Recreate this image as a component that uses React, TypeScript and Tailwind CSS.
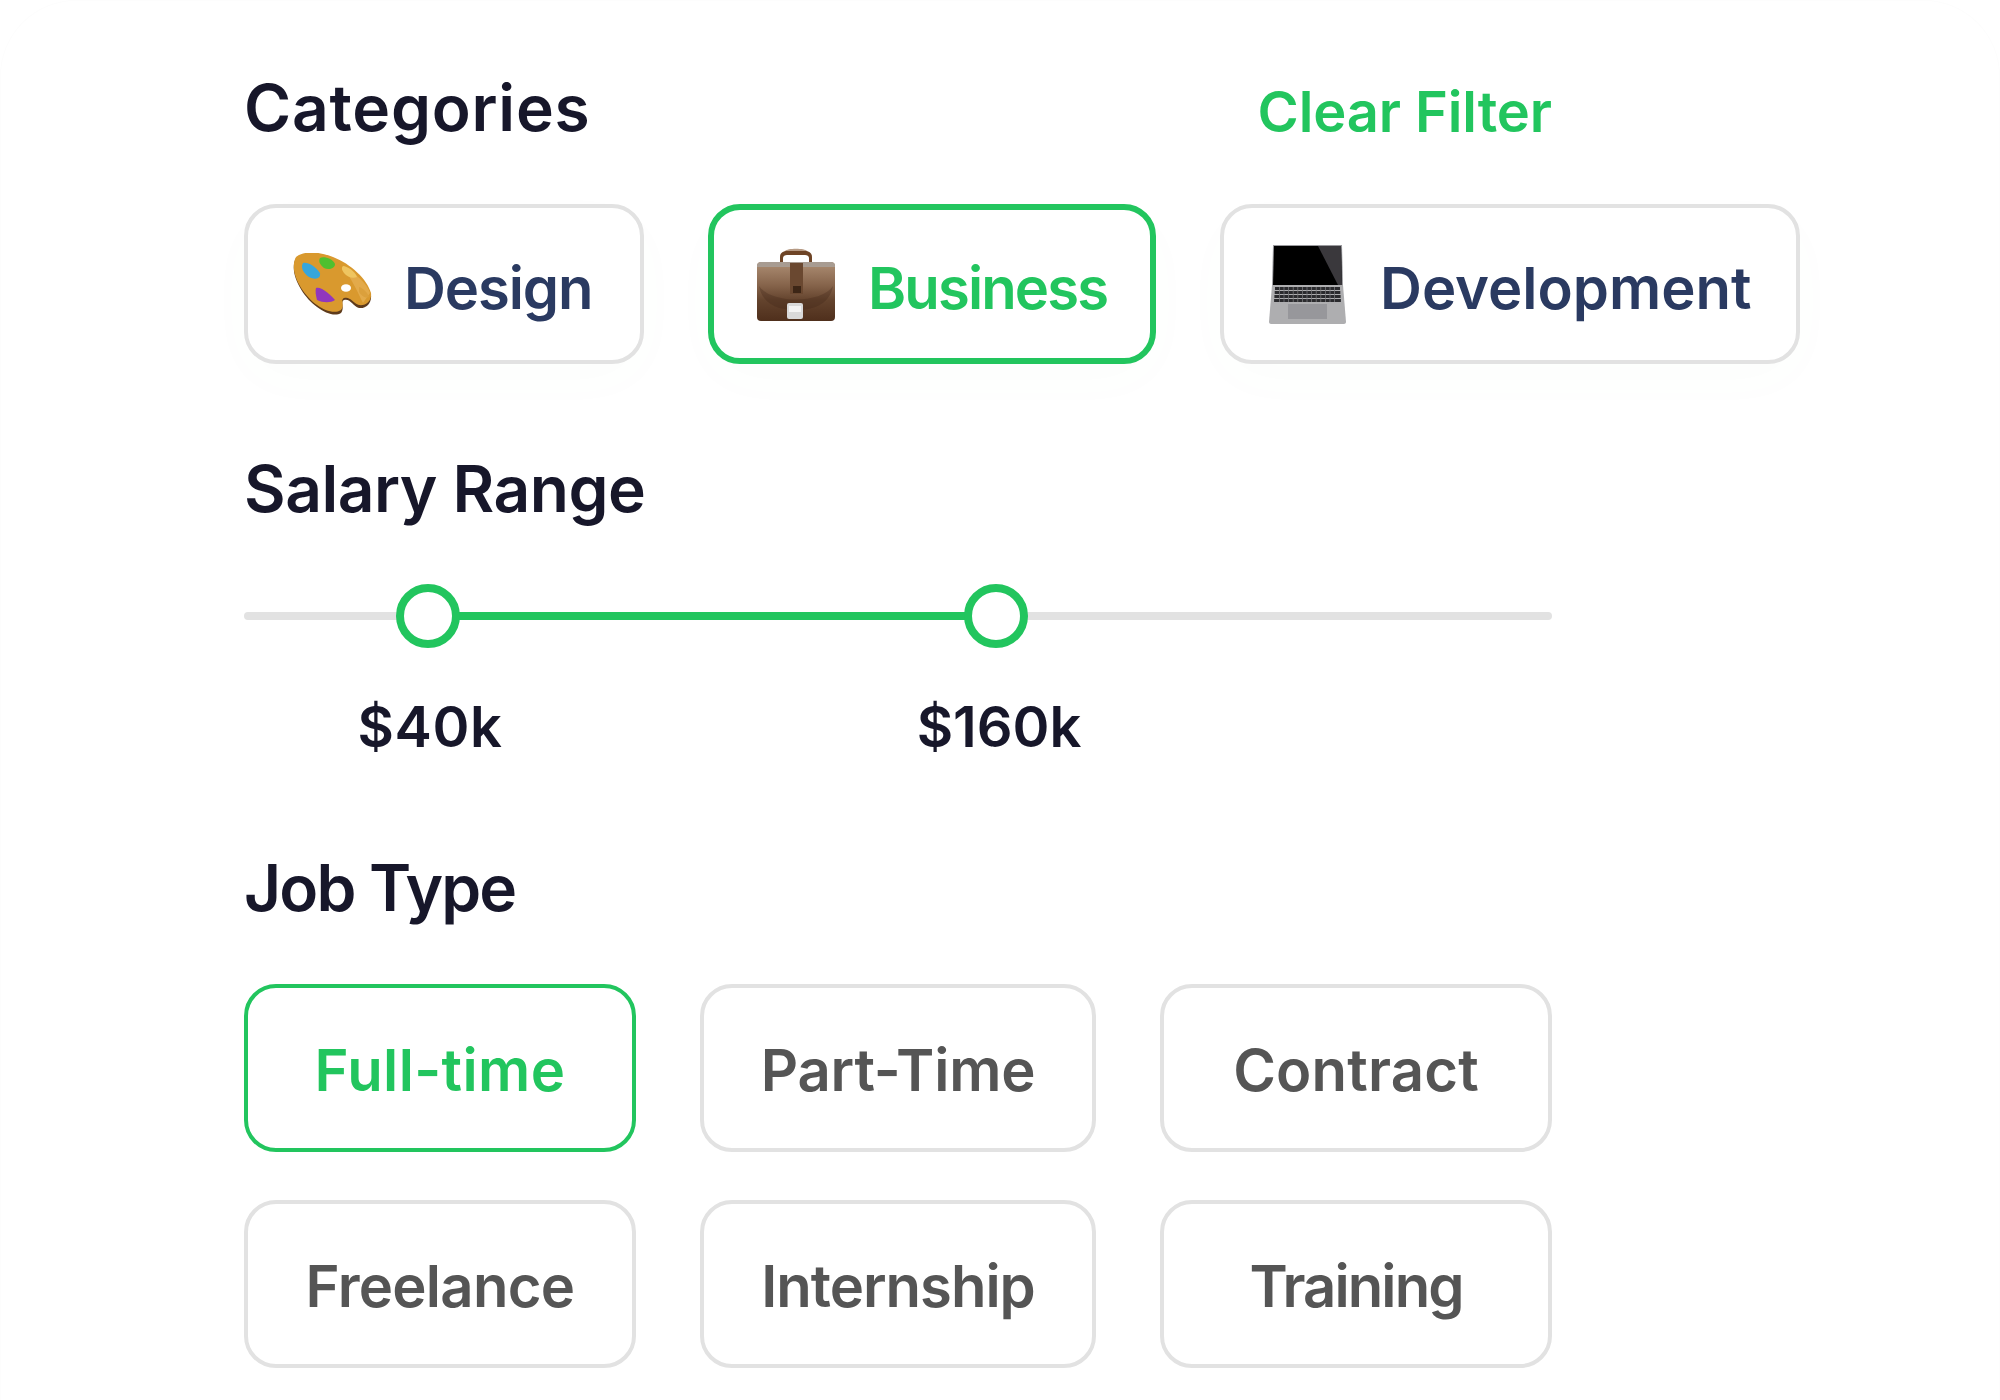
const font = "font-['Inter',sans-serif]";

function Palette() {
  return (
    <svg width="79" height="62" viewBox="0 0 79 62">
      <path d="M3 5C10 -1 25 -1 40 5C58 12 74 28 78 42C79 50 73 56 66 55C60 53 57 45 51 47C47 49 52 55 48 60C42 64 32 60 24 54C10 44 -5 20 3 5Z" fill="#5e3b1c" />
      <path d="M3 4C10 -2 25 -2 40 4C58 11 74 26 78 40C79 48 73 53 66 52C60 50 57 43 51 45C47 47 52 52 48 57C42 61 32 58 24 52C10 42 -5 19 3 4Z" fill="#d9992e" />
      <path d="M50 14C62 20 74 30 77 40L70 50C66 42 60 28 50 14Z" fill="#e3aa4a" />
      <path d="M10 10C15 9 22 13 27 20C28 26 22 27 16 24C11 21 7 14 10 10Z" fill="#37a6dc" />
      <path d="M27 5C31 3 40 6 42 11C42 16 35 17 31 15C27 12 25 8 27 5Z" fill="#4fc02f" />
      <path d="M50 13C54 13 62 18 64 24C60 26 54 24 51 20C49 17 48 15 50 13Z" fill="#efc560" />
      <path d="M23 35C28 33 38 42 42 47C38 50 30 50 24 47C23 43 22 38 23 35Z" fill="#9137bd" />
      <path d="M66 34C70 35 75 40 76 44C72 46 68 42 66 39Z" fill="#dba03c" />
      <ellipse cx="53" cy="35" rx="5" ry="3.8" fill="#fff" />
    </svg>
  );
}

function Briefcase() {
  return (
    <svg width="78" height="73" viewBox="0 0 78 73">
      <defs>
        <linearGradient id="bc" x1="0" y1="0" x2="0" y2="1">
          <stop offset="0" stopColor="#ad8e74" />
          <stop offset="0.4" stopColor="#85634a" />
          <stop offset="0.65" stopColor="#63432d" />
          <stop offset="1" stopColor="#4f2f1c" />
        </linearGradient>
      </defs>
      <path d="M23 15V9C23 5 26 3 30 3H48C52 3 55 5 55 9V15H52V10C52 8 50 7 48 7H30C28 7 26 8 26 10V15Z" fill="#6e4426" />
      <path d="M28 3C30 0 48 0 50 3Z" fill="#b69a84" />
      <rect x="0" y="14" width="78" height="59" rx="4" fill="url(#bc)" />
      <path d="M0 18C0 15 2 14 4 14H74C76 14 78 15 78 18V19H0Z" fill="#a89c92" />
      <path d="M2 38C14 56 64 56 76 38C73 54 60 62 39 62C18 62 5 54 2 38Z" fill="#3f2516" opacity="0.3" />
      <rect x="33" y="15" width="13" height="31" fill="#6a4830" />
      <rect x="36" y="38" width="8" height="7" fill="#3d2616" />
      <rect x="30" y="55" width="16" height="16" rx="2" fill="#d9d9d9" />
      <rect x="32" y="58" width="12" height="6" fill="#f3f3f3" />
    </svg>
  );
}

function Laptop() {
  const rows = [0, 1, 2, 3];
  const cols = [0, 1, 2, 3, 4, 5, 6, 7, 8, 9, 10, 11, 12];
  return (
    <svg width="79" height="79" viewBox="0 0 79 79">
      <path d="M5 0H74L75 41H4Z" fill="#9a9a9e" />
      <path d="M6 1H73L74 40H5Z" fill="#000" />
      <path d="M50 1H73L74 40H70Z" fill="#3a383c" />
      <path d="M4 40H75L78 77C78 78 77 79 76 79H3C2 79 1 78 1 77Z" fill="#aeaeb0" />
      {rows.map((row) => (
        <rect key={row} x={7 - row * 0.3} y={42 + row * 4} width={65 + row * 0.6} height="3" fill="#2b2b2e" />
      ))}
      {cols.map((k) => (
        <rect key={k} x={11 + k * 4.6} y="42" width="0.8" height="15" fill="#77777a" />
      ))}
      <rect x="20" y="59" width="39" height="15" fill="#97979b" />
    </svg>
  );
}

const categories = [
  { label: "Design", icon: <Palette />, width: "w-[400px]", pad: "pl-[45px] gap-[32px]", track: "tracking-[-1.1px]", active: false },
  { label: "Business", icon: <Briefcase />, width: "w-[448px]", pad: "pl-[43px] gap-[33px]", track: "tracking-[-1.9px]", active: true },
  { label: "Development", icon: <Laptop />, width: "w-[580px]", pad: "pl-[44px] gap-[33px]", track: "tracking-[0px]", active: false },
];

const jobTypes = [
  { label: "Full-time", track: "tracking-[0.4px]" },
  { label: "Part-Time", track: "tracking-[-0.2px]" },
  { label: "Contract", track: "tracking-[0.2px]" },
  { label: "Freelance", track: "tracking-[-0.7px]" },
  { label: "Internship", track: "tracking-[-1px]" },
  { label: "Training", track: "tracking-[-1.9px]" },
];

export default function App() {
  return (
    <div className={`${font} w-[2000px] h-[1400px] bg-white overflow-hidden`}>
      <div className="h-[1400px] rounded-t-[76px] border border-b-0 border-[#fdfdfd] pl-[243px] pt-[65px]">
        <div className="flex items-center justify-between w-[1308px] h-[84px]">
          <h2 className="text-[64px] font-semibold text-[#17172a] tracking-[0.8px]">Categories</h2>
          <button className="mt-[8px] text-[56px] font-semibold text-[#22c55e] tracking-[-0.1px]">Clear Filter</button>
        </div>

        <div className="flex gap-[64px] mt-[54px]">
          {categories.map((c) => (
            <div
              key={c.label}
              className={`${c.width} ${c.pad} h-[160px] flex items-center rounded-[32px] bg-white shadow-[0_16px_60px_rgba(34,197,94,0.015)] ${
                c.active ? "border-[6px] border-[#22c55e]" : "border-[4px] border-[#e2e2e2]"
              }`}
            >
              {c.icon}
              <span className={`mt-[8px] text-[58px] font-semibold ${c.track} ${c.active ? "text-[#22c55e]" : "text-[#2a3a61]"}`}>{c.label}</span>
            </div>
          ))}
        </div>

        <h2 className="text-[64px] font-semibold text-[#17172a] tracking-[-0.5px] mt-[83px] leading-[84px]">Salary Range</h2>

        <div className="relative w-[1308px] h-[8px] rounded-full bg-[#e2e2e2] mt-[81px]">
          <div className="absolute left-[184px] w-[570px] h-[8px] bg-[#22c55e]" />
          <div className="absolute left-[152px] top-[-28px] w-[64px] h-[64px] rounded-full border-[8px] border-[#22c55e] bg-white" />
          <div className="absolute left-[720px] top-[-28px] w-[64px] h-[64px] rounded-full border-[8px] border-[#22c55e] bg-white" />
        </div>

        <div className="flex mt-[72px] text-[56px] leading-[70px] font-semibold text-[#17172a]">
          <span className="w-[200px] ml-[86px] text-center tracking-[0.6px]">$40k</span>
          <span className="w-[200px] ml-[369px] text-center">$160k</span>
        </div>

        <h2 className="text-[64px] font-semibold text-[#17172a] tracking-[-1.8px] mt-[84px] leading-[84px]">Job Type</h2>

        <div className="grid grid-cols-[392px_396px_392px] gap-x-[64px] gap-y-[48px] mt-[54px]">
          {jobTypes.map((j, i) => (
            <div
              key={j.label}
              className={`h-[168px] pt-[5px] flex items-center justify-center rounded-[32px] text-[58px] font-semibold border-[4px] ${j.track} ${
                i === 0 ? "border-[#22c55e] text-[#22c55e]" : "border-[#e2e2e2] text-[#555555]"
              }`}
            >
              {j.label}
            </div>
          ))}
        </div>
      </div>
    </div>
  );
}
